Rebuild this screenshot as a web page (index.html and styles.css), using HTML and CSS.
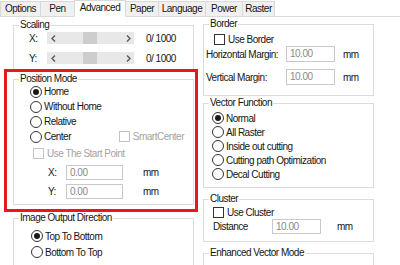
FILE: index.html
```html
<!DOCTYPE html>
<html lang="en">
<head>
    <meta charset="UTF-8">
    <title>Advanced Settings</title>
    <link rel="stylesheet" href="styles.css">
</head>
<body>
    <div class="tabs">
        <div class="tab">Options</div>
        <div class="tab">Pen</div>
        <div class="tab active">Advanced</div>
        <div class="tab">Paper</div>
        <div class="tab">Language</div>
        <div class="tab">Power</div>
        <div class="tab">Raster</div>
    </div>

    <div class="panel">
        <div class="col col-left">
            <fieldset class="group scaling">
                <legend>Scaling</legend>
                <div class="scale-row">
                    <span class="axis">X:</span>
                    <div class="scrollbar">
                        <span class="arrow"><svg width="5" height="7" viewBox="0 0 5 7"><path d="M4 .5 1 3.5 4 6.5" fill="none" stroke="#5a5a5a" stroke-width="1.4"/></svg></span>
                        <span class="track"><span class="thumb"></span></span>
                        <span class="arrow"><svg width="5" height="7" viewBox="0 0 5 7"><path d="M1 .5 4 3.5 1 6.5" fill="none" stroke="#5a5a5a" stroke-width="1.4"/></svg></span>
                    </div>
                    <span class="value">0/ 1000</span>
                </div>
                <div class="scale-row">
                    <span class="axis">Y:</span>
                    <div class="scrollbar">
                        <span class="arrow"><svg width="5" height="7" viewBox="0 0 5 7"><path d="M4 .5 1 3.5 4 6.5" fill="none" stroke="#5a5a5a" stroke-width="1.4"/></svg></span>
                        <span class="track"><span class="thumb"></span></span>
                        <span class="arrow"><svg width="5" height="7" viewBox="0 0 5 7"><path d="M1 .5 4 3.5 1 6.5" fill="none" stroke="#5a5a5a" stroke-width="1.4"/></svg></span>
                    </div>
                    <span class="value">0/ 1000</span>
                </div>
            </fieldset>

            <fieldset class="group position">
                <legend>Position Mode</legend>
                <div class="opt"><span class="radio on"></span>Home</div>
                <div class="opt"><span class="radio"></span>Without Home</div>
                <div class="opt"><span class="radio"></span>Relative</div>
                <div class="opt center-row">
                    <span class="radio"></span>Center
                    <span class="smart disabled"><span class="check"></span>SmartCenter</span>
                </div>
                <div class="start-row disabled"><span class="check"></span>Use The Start Point</div>
                <div class="coord-row">
                    <span class="axis">X:</span>
                    <span class="field">0.00</span>
                    <span class="unit">mm</span>
                </div>
                <div class="coord-row">
                    <span class="axis">Y:</span>
                    <span class="field">0.00</span>
                    <span class="unit">mm</span>
                </div>
            </fieldset>

            <fieldset class="group output">
                <legend>Image Output Direction</legend>
                <div class="opt"><span class="radio on"></span>Top To Bottom</div>
                <div class="opt"><span class="radio"></span>Bottom To Top</div>
            </fieldset>
        </div>

        <div class="col col-right">
            <fieldset class="group border-box">
                <legend>Border</legend>
                <div class="check-row"><span class="check"></span>Use Border</div>
                <div class="margin-row">
                    <span class="label">Horizontal Margin:</span>
                    <span class="field">10.00</span>
                    <span class="unit">mm</span>
                </div>
                <div class="margin-row">
                    <span class="label">Vertical Margin:</span>
                    <span class="field">10.00</span>
                    <span class="unit">mm</span>
                </div>
            </fieldset>

            <fieldset class="group vector">
                <legend>Vector Function</legend>
                <div class="opt"><span class="radio on"></span>Normal</div>
                <div class="opt"><span class="radio"></span>All Raster</div>
                <div class="opt"><span class="radio"></span>Inside out cutting</div>
                <div class="opt"><span class="radio"></span>Cutting path Optimization</div>
                <div class="opt"><span class="radio"></span>Decal Cutting</div>
            </fieldset>

            <fieldset class="group cluster">
                <legend>Cluster</legend>
                <div class="check-row"><span class="check"></span>Use Cluster</div>
                <div class="distance-row">
                    <span class="label">Distance</span>
                    <span class="field">10.00</span>
                    <span class="unit">mm</span>
                </div>
            </fieldset>

            <fieldset class="group enhanced">
                <legend>Enhanced Vector Mode</legend>
            </fieldset>
        </div>
    </div>

    <div class="highlight"></div>
</body>
</html>
```

FILE: styles.css
```css
* {
    box-sizing: border-box;
}

body {
    margin: 0;
    width: 400px;
    height: 265px;
    overflow: hidden;
    position: relative;
    background-color: #fff;
    font-family: "Liberation Sans", Arial, sans-serif;
    font-size: 10px;
    letter-spacing: -0.5px;
    color: #151515;
}

/* tab strip */
.tabs {
    display: flex;
    align-items: flex-end;
    height: 17px;
    border-bottom: 1px solid #d9d9d9;
}

.tab {
    height: 15px;
    margin-left: -1px;
    border: 1px solid #d9d9d9;
    border-bottom: none;
    background-color: #f0f0f0;
    text-align: center;
    line-height: 13px;
}

.tab:first-child { margin-left: 0; width: 41px; }
.tab:nth-child(2) { width: 35px; }
.tab:nth-child(3) { width: 52px; }
.tab:nth-child(4) { width: 34px; }
.tab:nth-child(5) { width: 48px; }
.tab:nth-child(6) { width: 38px; }
.tab:nth-child(7) { width: 33px; }

.tab.active {
    height: 17px;
    margin-bottom: -1px;
    background-color: #fff;
    line-height: 13px;
}

/* columns */
.panel {
    display: flex;
    gap: 9px;
    padding-left: 13px;
}

.col {
    display: flex;
    flex-direction: column;
}

.col-left { width: 181px; }
.col-right { width: 171px; }

.group {
    margin: 0;
    padding: 0;
    min-width: 0;
    flex: none;
    border: 1px solid #dcdcdc;
}

.group legend {
    margin-left: 5px;
    padding: 0 1px;
    height: 12px;
    line-height: 12px;
}

.disabled { color: #a3a3a3; }
.disabled .check { border-color: #c2c2c2; }

/* controls */
.radio {
    display: inline-flex;
    align-items: center;
    justify-content: center;
    flex: none;
    width: 12px;
    height: 12px;
    margin-right: 2px;
    border: 1px solid #333;
    border-radius: 50%;
    background-color: #fff;
}

.radio.on::after {
    content: '';
    width: 6px;
    height: 6px;
    border-radius: 50%;
    background-color: #1a1a1a;
}

.check {
    display: inline-block;
    flex: none;
    width: 11px;
    height: 11px;
    margin-right: 3px;
    border: 1px solid #333;
    background-color: #fff;
}

.field {
    flex: none;
    height: 15px;
    padding: 1px 0 0 3px;
    border: 1px solid #c9c9c9;
    background-color: #fff;
    color: #8a8a8a;
    line-height: 11px;
}

.opt {
    display: flex;
    align-items: center;
}

/* scaling */
.scaling {
    margin-top: 2px;
    height: 53px;
}

.scale-row {
    display: flex;
    align-items: center;
    height: 12px;
    margin-top: 1px;
    padding-left: 15px;
}

.scale-row + .scale-row { margin-top: 8px; }

.scale-row .axis { width: 18px; }

.scrollbar {
    display: flex;
    width: 87px;
    height: 12px;
    background-color: #e8e8e8;
}

.arrow {
    display: flex;
    align-items: center;
    justify-content: center;
    width: 12px;
}

.track {
    display: flex;
    flex: 1;
}

.thumb {
    width: 14px;
    margin-left: 24px;
    background-color: #cdcdcd;
}

.value { margin-left: 12px; }

/* position mode */
.position {
    margin-top: 1px;
    height: 132px;
}

.position .opt {
    height: 15px;
    padding-left: 16px;
}

.position .opt:first-of-type { margin-top: -1px; }

.smart {
    display: flex;
    align-items: center;
    margin-left: auto;
    margin-right: 9px;
}

.start-row {
    display: flex;
    align-items: center;
    height: 14px;
    margin-top: 2px;
    padding-left: 19px;
}

.coord-row {
    display: flex;
    align-items: center;
    margin-top: 5px;
    padding-left: 34px;
}

.coord-row + .coord-row { margin-top: 4px; }
.coord-row .axis { width: 18px; }
.coord-row .field { width: 57px; }
.coord-row .unit { margin-left: 20px; }

/* image output */
.output {
    margin-top: 7px;
    height: 70px;
}

.output .opt {
    height: 16px;
    padding-left: 17px;
}

.output .opt:first-of-type { margin-top: 4px; }

/* border */
.border-box {
    margin-top: 1px;
    height: 78px;
}

.check-row {
    display: flex;
    align-items: center;
    height: 12px;
    margin-top: 3px;
    padding-left: 10px;
}

.margin-row {
    display: flex;
    align-items: center;
    margin-top: 1px;
    padding-left: 2px;
}

.margin-row + .margin-row { margin-top: 7px; }
.margin-row .label { width: 80px; }
.margin-row .field { width: 49px; height: 16px; }
.margin-row .unit { margin-left: 8px; }

/* vector function */
.vector {
    margin-top: 1px;
    height: 91px;
}

.vector .opt {
    height: 14px;
    padding-left: 8px;
}

.vector .opt:first-of-type { margin-top: 2px; }

/* cluster */
.cluster {
    margin-top: 5px;
    height: 49px;
}

.cluster .check-row {
    margin-top: 1px;
    padding-left: 9px;
}

.distance-row {
    display: flex;
    align-items: center;
    margin-top: 1px;
    padding-left: 9px;
}

.distance-row .label { width: 59px; }
.distance-row .field { width: 49px; }
.distance-row .unit { margin-left: 16px; }

.enhanced {
    margin-top: 5px;
    height: 40px;
}

/* red annotation frame */
.highlight {
    position: absolute;
    left: 4px;
    top: 69px;
    width: 194px;
    height: 143px;
    border: 3px solid #e5171f;
}
```
